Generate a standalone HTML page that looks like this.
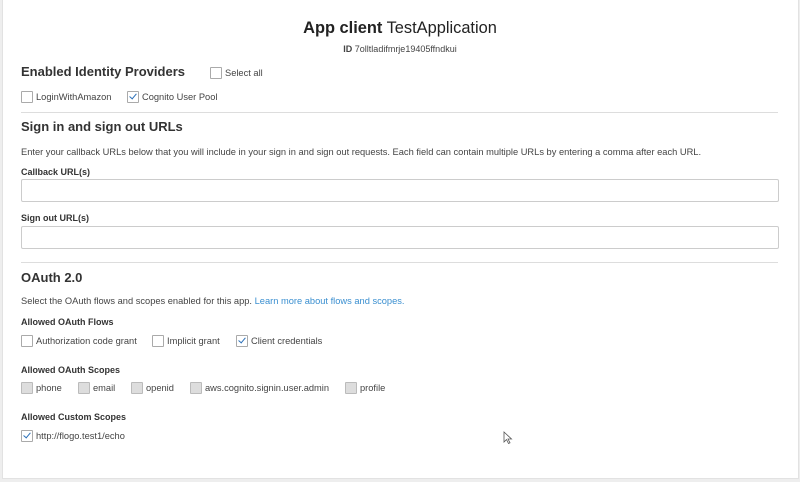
<!DOCTYPE html>
<html><head><style>
body{margin:0;width:800px;height:482px;background:#eee;font-family:"Liberation Sans",Arial,sans-serif;color:#333;position:relative;overflow:hidden}
.card{position:absolute;left:2px;top:0;width:795px;height:478px;background:#fff;border:1px solid #e2e2e2;border-top:none}
.a{position:absolute;white-space:nowrap}
.h{font-weight:bold;font-size:13px;color:#333}
.s{font-size:9.3px;color:#444}
.l{font-weight:bold;font-size:9px;color:#333}
.cb{position:absolute;width:10px;height:10px;border:1px solid #aaa;border-radius:1px;background:#fff}
.cb.g{background:#ddd;border-color:#bbb}
.cb.c::after{content:"";position:absolute;left:3px;top:0px;width:3px;height:6px;border:solid #2a6fb8;border-width:0 1.5px 1.5px 0;transform:rotate(40deg)}
.inp{position:absolute;left:21px;width:756px;height:21px;border:1px solid #ccc;border-radius:2px;background:#fff}
.hr{position:absolute;left:21px;width:757px;height:1px;background:#ddd}
</style></head><body>
<div class="card"></div>
<div class="a" style="left:0;width:800px;text-align:center;top:19px;font-size:16.4px;color:#222"><b>App client</b> TestApplication</div>
<div class="a" style="left:0;width:800px;text-align:center;top:44px;font-size:9px;color:#444"><b>ID</b> 7olltladifmrje19405ffndkui</div>
<div class="a h" style="left:21px;top:64px">Enabled Identity Providers</div>
<div class="cb" style="left:210px;top:67px"></div><div class="a s" style="left:225px;top:68px">Select all</div>
<div class="cb" style="left:21px;top:91px"></div><div class="a s" style="left:36px;top:92px">LoginWithAmazon</div>
<div class="cb c" style="left:127px;top:91px"></div><div class="a s" style="left:142px;top:92px">Cognito User Pool</div>
<div class="hr" style="top:112px"></div>
<div class="a h" style="left:21px;top:119px">Sign in and sign out URLs</div>
<div class="a s" style="left:21px;top:147px">Enter your callback URLs below that you will include in your sign in and sign out requests. Each field can contain multiple URLs by entering a comma after each URL.</div>
<div class="a l" style="left:21px;top:167px">Callback URL(s)</div>
<div class="inp" style="top:179px"></div>
<div class="a l" style="left:21px;top:213px">Sign out URL(s)</div>
<div class="inp" style="top:226px"></div>
<div class="hr" style="top:262px"></div>
<div class="a h" style="left:21px;top:270px">OAuth 2.0</div>
<div class="a s" style="left:21px;top:296px">Select the OAuth flows and scopes enabled for this app. <span style="color:#3a8fd0">Learn more about flows and scopes.</span></div>
<div class="a l" style="left:21px;top:317px">Allowed OAuth Flows</div>
<div class="cb" style="left:21px;top:335px"></div><div class="a s" style="left:36px;top:336px">Authorization code grant</div>
<div class="cb" style="left:152px;top:335px"></div><div class="a s" style="left:167px;top:336px">Implicit grant</div>
<div class="cb c" style="left:236px;top:335px"></div><div class="a s" style="left:251px;top:336px">Client credentials</div>
<div class="a l" style="left:21px;top:365px">Allowed OAuth Scopes</div>
<div class="cb g" style="left:21px;top:382px"></div><div class="a s" style="left:36px;top:383px">phone</div>
<div class="cb g" style="left:78px;top:382px"></div><div class="a s" style="left:93px;top:383px">email</div>
<div class="cb g" style="left:131px;top:382px"></div><div class="a s" style="left:146px;top:383px">openid</div>
<div class="cb g" style="left:190px;top:382px"></div><div class="a s" style="left:205px;top:383px">aws.cognito.signin.user.admin</div>
<div class="cb g" style="left:345px;top:382px"></div><div class="a s" style="left:360px;top:383px">profile</div>
<div class="a l" style="left:21px;top:412px">Allowed Custom Scopes</div>
<div class="cb c" style="left:21px;top:430px"></div><div class="a s" style="left:36px;top:431px">http://flogo.test1/echo</div>
<svg class="a" style="left:503px;top:431px" width="12" height="14" viewBox="0 0 12 14"><path d="M1 1 L1 11 L3.5 8.5 L5.5 12.5 L7 11.8 L5 8 L8.5 8 Z" fill="#fff" stroke="#555" stroke-width="0.8"/></svg>
</body></html>
